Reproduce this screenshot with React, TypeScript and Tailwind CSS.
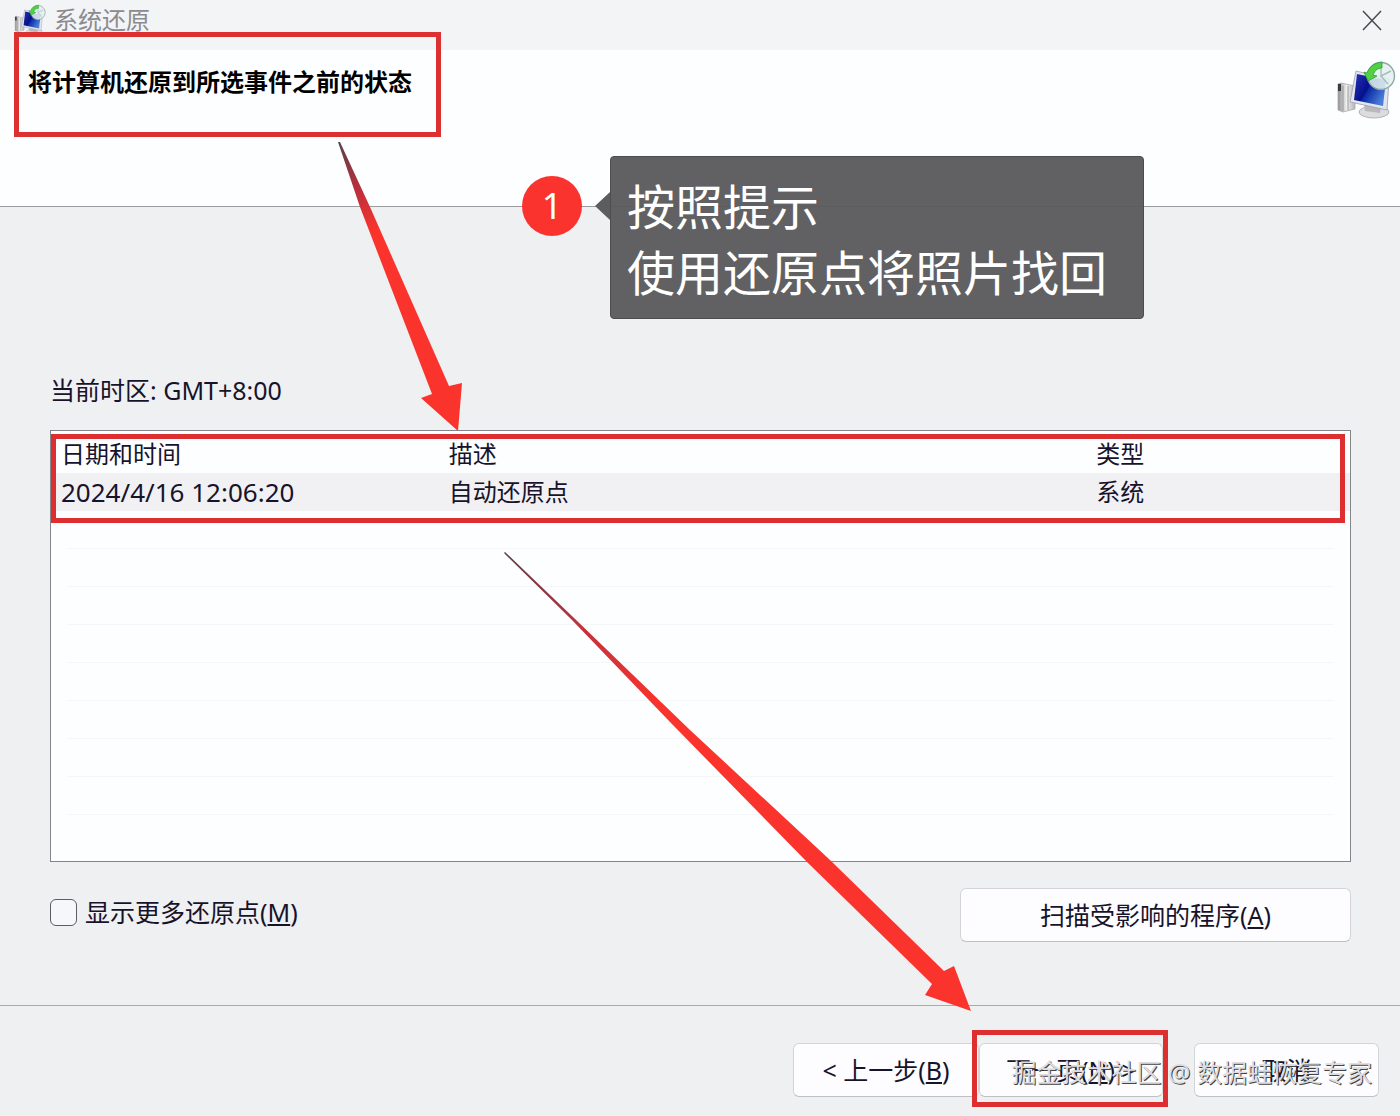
import React from "react";

function ComputerIcon({ className }: { className: string }) {
  return (
    <svg viewBox="0 0 60 60" className={className} aria-hidden="true">
      <defs>
        <linearGradient id="screen" x1="0" y1="0" x2="1" y2="0.6">
          <stop offset="0" stopColor="#2733b4" />
          <stop offset="0.5" stopColor="#04108c" />
          <stop offset="0.56" stopColor="#0c2ba6" />
          <stop offset="1" stopColor="#4a7fd8" />
        </linearGradient>
        <linearGradient id="tower" x1="0" y1="0" x2="1" y2="0">
          <stop offset="0" stopColor="#8f8f91" />
          <stop offset="0.5" stopColor="#efefef" />
          <stop offset="1" stopColor="#b5b5b8" />
        </linearGradient>
      </defs>
      <path d="M2 24 L5 23 L19 26 L19 49 L7 52 L2 50 Z" fill="url(#tower)" stroke="#a9a9ab" strokeWidth="0.8" />
      <path d="M2 24 L5 24 L5 31 L2 31 Z" fill="#3b3b3d" />
      <path d="M7 26 L7 51 M12 26 L12 50" stroke="#8d8d90" strokeWidth="0.8" />
      <ellipse cx="38" cy="52" rx="15" ry="6" fill="#dcdcde" stroke="#a4a4a8" strokeWidth="0.8" />
      <path d="M28 44 L45 47 L44 53 L29 51 Z" fill="#b9b9bd" />
      <path d="M20 11 L53 19 L51 50 L14 42 Z" fill="#e2e4ee" stroke="#9a9dac" strokeWidth="0.8" />
      <path d="M21 14 L50 20 L47 46 L18 40 Z" fill="url(#screen)" />
      <circle cx="45" cy="16" r="13.5" fill="#e3eff0" fillOpacity="0.88" stroke="#92a7a5" strokeWidth="1.4" />
      <path d="M45 5 V16 L55 11 M45 16 L52 24" stroke="#a9bdbd" strokeWidth="1.4" fill="none" />
      <path d="M46 2 C38 3 33 7 31 13 L28 12 L32 21 L41 16 L37 15 C39 10 42 8 46 8 Z" fill="#4fd142" stroke="#2f9c35" strokeWidth="0.8" />
    </svg>
  );
}

const buttonStyle =
  "h-[54px] rounded-md border border-[#d3d4d8] border-b-[#bfc0c5] bg-[#fdfdff] text-center text-[25px]";

const emptyRows = [1, 2, 3, 4, 5, 6, 7, 8];

export default function App() {
  return (
    <main className="relative flex min-h-screen flex-col overflow-hidden bg-[#eff0f2] font-['Noto_Sans','Noto_Sans_CJK_SC',sans-serif] text-2xl leading-9 text-[#17132b]">
      <div className="flex h-[50px] items-start justify-between bg-[#f3f4f6] pl-3.5 pr-4">
        <div className="flex items-start gap-2">
          <ComputerIcon className="mt-1 size-8" />
          <span className="mt-0.5 text-[#8b8b8f]">系统还原</span>
        </div>
        <button type="button" aria-label="关闭" className="mt-2 flex size-6 items-center justify-center">
          <svg viewBox="0 0 24 24" className="size-6" stroke="#4b4b4f" strokeWidth="1.5" fill="none">
            <path d="M3 3 L21 22 M21 3 L3 22" />
          </svg>
        </button>
      </div>

      <header className="relative flex h-[157px] items-start justify-between border-b border-[#9b9ca0] bg-[#fdfeff] pl-7 pr-1">
        <h1 className="mt-3.5 font-bold text-black">将计算机还原到所选事件之前的状态</h1>
        <ComputerIcon className="mt-2.5 size-[60px]" />
        <div className="absolute -top-[18px] left-3.5 h-[105px] w-[427px] border-[5px] border-[#dd3030]" />
        <div className="absolute left-[522px] top-[106px] z-10 flex items-start">
          <span className="mt-5 flex size-[60px] items-center justify-center rounded-full bg-[#fa332f] text-4xl text-white">1</span>
          <svg viewBox="0 0 16 36" className="ml-3 mt-8 h-9 w-4" fill="#5c5d5f">
            <path d="M16 0 V4 L1 18 L16 32 V36 Z" />
          </svg>
          <p className="w-[534px] rounded border border-[#4c4d4f] bg-[#58595b]/95 px-4 pb-3 pt-[17px] text-5xl leading-[66px] text-white">
            按照提示
            <br />
            使用还原点将照片找回
          </p>
        </div>
      </header>

      <section className="flex flex-1 flex-col pl-[50px] pr-[49px] pt-[165px]">
        <p className="text-[25px]">当前时区: GMT+8:00</p>
        <div className="relative mt-[22px] h-[432px] border border-[#85868b] bg-[#fdfeff] pt-1">
          <table className="w-full table-fixed border-collapse text-left">
            <colgroup>
              <col className="w-[30%]" />
              <col className="w-[50%]" />
              <col className="w-[20%]" />
            </colgroup>
            <thead>
              <tr className="h-[38px]">
                <th className="p-0 pl-2.5 font-normal">日期和时间</th>
                <th className="p-0 pl-2 font-normal">描述</th>
                <th className="p-0 pl-1.5 font-normal">类型</th>
              </tr>
            </thead>
            <tbody>
              <tr className="h-[38px] bg-[#f1f1f3]">
                <td className="p-0 pl-2.5 text-[26px]">2024/4/16 12:06:20</td>
                <td className="p-0 pl-2">自动还原点</td>
                <td className="p-0 pl-1.5">系统</td>
              </tr>
            </tbody>
          </table>
          <div className="px-4" aria-hidden="true">
            {emptyRows.map((row) => (
              <div key={row} className="h-[38px] border-b border-[#f5f6f8]" />
            ))}
          </div>
          <div className="absolute left-0 right-[5px] top-[3px] h-[89px] border-[5px] border-[#dd2f2f]" />
        </div>
        <div className="mt-[26px] flex items-start justify-between">
          <label className="mt-1.5 flex items-center gap-2">
            <input
              type="checkbox"
              className="size-[27px] appearance-none rounded-md border border-[#5c5c62] bg-[#f6f7f9]"
            />
            <span className="text-[25px]">
              显示更多还原点(<u className="underline-offset-2">M</u>)
            </span>
          </label>
          <button type="button" className={`${buttonStyle} w-[391px]`}>
            扫描受影响的程序(<u className="underline-offset-2">A</u>)
          </button>
        </div>
      </section>

      <footer className="relative flex h-[111px] justify-end border-t border-[#a9aaae] pr-[21px] pt-[37px]">
        <button type="button" className={`${buttonStyle} w-[186px]`}>
          &lt; 上一步(<u className="underline-offset-2">B</u>)
        </button>
        <div className="relative">
          <button type="button" className={`${buttonStyle} w-[184px]`}>
            下一页(<u className="underline-offset-2">N</u>) &gt;
          </button>
          <div className="absolute -left-[7px] -top-[13px] h-[77px] w-[196px] border-[5px] border-[#dd2f2f]" />
        </div>
        <button type="button" className={`${buttonStyle} ml-[31px] w-[185px]`}>
          取消
        </button>
        <span className="pointer-events-none absolute right-7 top-12 whitespace-nowrap text-[25px] text-[#dedee0] [text-shadow:1px_1px_0_#444]">
          掘金技术社区 @ 数据蛙恢复专家
        </span>
      </footer>

      <svg viewBox="0 0 1400 1116" className="pointer-events-none absolute left-0 top-0 h-[1116px] w-[1400px]" aria-hidden="true">
        <defs>
          <linearGradient id="arrow-short" gradientUnits="userSpaceOnUse" x1="339" y1="142" x2="375" y2="230">
            <stop offset="0" stopColor="#5a4048" />
            <stop offset="0.5" stopColor="#b52f3c" />
            <stop offset="1" stopColor="#fa332c" />
          </linearGradient>
          <linearGradient id="arrow-long" gradientUnits="userSpaceOnUse" x1="504" y1="552" x2="660" y2="705">
            <stop offset="0" stopColor="#5a4048" />
            <stop offset="0.5" stopColor="#c4303c" />
            <stop offset="1" stopColor="#fa332c" />
          </linearGradient>
        </defs>
        <path
          d="M338 142 L340 142 L370 207 L449 386 L462 383 L458 431 L421 398 L432 394 L360 207 Z"
          fill="url(#arrow-short)"
        />
        <path
          d="M504 553 L505 552 L574 618 L690 730 L830 860 L944 971 L954 966 L971 1011 L925 995 L932 984 L807 862 L670 722 L572 620 Z"
          fill="url(#arrow-long)"
        />
      </svg>
    </main>
  );
}
